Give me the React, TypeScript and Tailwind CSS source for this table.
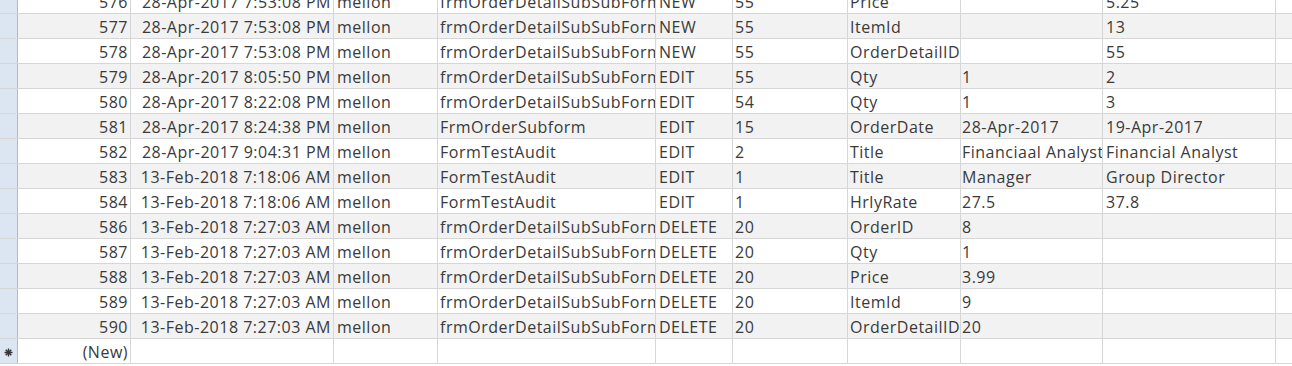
import React from "react";

type Row = {
  id: string;
  date: string;
  user: string;
  form: string;
  action: string;
  num: string;
  field: string;
  oldVal: string;
  newVal: string;
};

const rows: Row[] = [
  { id: "576", date: "28-Apr-2017 7:53:08 PM", user: "mellon", form: "frmOrderDetailSubSubForm", action: "NEW", num: "55", field: "Price", oldVal: "", newVal: "5.25" },
  { id: "577", date: "28-Apr-2017 7:53:08 PM", user: "mellon", form: "frmOrderDetailSubSubForm", action: "NEW", num: "55", field: "ItemId", oldVal: "", newVal: "13" },
  { id: "578", date: "28-Apr-2017 7:53:08 PM", user: "mellon", form: "frmOrderDetailSubSubForm", action: "NEW", num: "55", field: "OrderDetailID", oldVal: "", newVal: "55" },
  { id: "579", date: "28-Apr-2017 8:05:50 PM", user: "mellon", form: "frmOrderDetailSubSubForm", action: "EDIT", num: "55", field: "Qty", oldVal: "1", newVal: "2" },
  { id: "580", date: "28-Apr-2017 8:22:08 PM", user: "mellon", form: "frmOrderDetailSubSubForm", action: "EDIT", num: "54", field: "Qty", oldVal: "1", newVal: "3" },
  { id: "581", date: "28-Apr-2017 8:24:38 PM", user: "mellon", form: "FrmOrderSubform", action: "EDIT", num: "15", field: "OrderDate", oldVal: "28-Apr-2017", newVal: "19-Apr-2017" },
  { id: "582", date: "28-Apr-2017 9:04:31 PM", user: "mellon", form: "FormTestAudit", action: "EDIT", num: "2", field: "Title", oldVal: "Financiaal Analyst", newVal: "Financial Analyst" },
  { id: "583", date: "13-Feb-2018 7:18:06 AM", user: "mellon", form: "FormTestAudit", action: "EDIT", num: "1", field: "Title", oldVal: "Manager", newVal: "Group Director" },
  { id: "584", date: "13-Feb-2018 7:18:06 AM", user: "mellon", form: "FormTestAudit", action: "EDIT", num: "1", field: "HrlyRate", oldVal: "27.5", newVal: "37.8" },
  { id: "586", date: "13-Feb-2018 7:27:03 AM", user: "mellon", form: "frmOrderDetailSubSubForm", action: "DELETE", num: "20", field: "OrderID", oldVal: "8", newVal: "" },
  { id: "587", date: "13-Feb-2018 7:27:03 AM", user: "mellon", form: "frmOrderDetailSubSubForm", action: "DELETE", num: "20", field: "Qty", oldVal: "1", newVal: "" },
  { id: "588", date: "13-Feb-2018 7:27:03 AM", user: "mellon", form: "frmOrderDetailSubSubForm", action: "DELETE", num: "20", field: "Price", oldVal: "3.99", newVal: "" },
  { id: "589", date: "13-Feb-2018 7:27:03 AM", user: "mellon", form: "frmOrderDetailSubSubForm", action: "DELETE", num: "20", field: "ItemId", oldVal: "9", newVal: "" },
  { id: "590", date: "13-Feb-2018 7:27:03 AM", user: "mellon", form: "frmOrderDetailSubSubForm", action: "DELETE", num: "20", field: "OrderDetailID", oldVal: "20", newVal: "" },
];

const cell = "h-full shrink-0 border-r border-[#d6d6d6] overflow-hidden whitespace-nowrap flex items-center pt-[2px]";

const NewMark = () => (
  <svg width="9" height="9" viewBox="0 0 9 9" className="text-[#333]">
    <path d="M4.5 0.5v8M0.5 4.5h8M1.7 1.7l5.6 5.6M7.3 1.7l-5.6 5.6" stroke="currentColor" strokeWidth="1.4" />
  </svg>
);

const DataRow: React.FC<{ r: Row; gray: boolean }> = ({ r, gray }) => (
  <div className={`flex h-[25px] border-b border-[#d6d6d6] ${gray ? "bg-[#f2f2f2]" : "bg-white"}`}>
    <div className="h-full w-[18px] shrink-0 bg-[#dce6f2] border-r border-[#a8bcd6]" />
    <div className={`${cell} w-[113px] justify-end pr-[2px]`}>{r.id}</div>
    <div className={`${cell} w-[203px] justify-end pr-[2px]`}>{r.date}</div>
    <div className={`${cell} w-[104px] pl-[3px]`}>{r.user}</div>
    <div className={`${cell} w-[218px] pl-[2px]`}>{r.form}</div>
    <div className={`${cell} w-[77px] pl-[3px]`}>{r.action}</div>
    <div className={`${cell} w-[115px] pl-[2px]`}>{r.num}</div>
    <div className={`${cell} w-[113px] pl-[2px]`}>{r.field}</div>
    <div className={`${cell} w-[142px] pl-[1px]`}>{r.oldVal}</div>
    <div className={`${cell} w-[173px] pl-[3px]`}>{r.newVal}</div>
    <div className="h-full flex-1" />
  </div>
);

export default function App() {
  return (
    <div className="h-[366px] w-[1292px] overflow-hidden bg-white text-[16px] tracking-[0.5px] text-[#3a3a3a] font-['Open_Sans','Liberation_Sans',sans-serif]">
      <div className="-mt-[11px]">
        {rows.map((r, i) => (
          <DataRow key={r.id} r={r} gray={i % 2 === 1} />
        ))}
        <div className="flex h-[25px] border-b border-[#d6d6d6] bg-white">
          <div className="h-full w-[18px] shrink-0 bg-[#dce6f2] border-r border-[#a8bcd6] flex items-center justify-center pt-[2px]">
            <NewMark />
          </div>
          <div className={`${cell} w-[113px] justify-end pr-[2px]`}>(New)</div>
          <div className={`${cell} w-[203px]`} />
          <div className={`${cell} w-[104px]`} />
          <div className={`${cell} w-[218px]`} />
          <div className={`${cell} w-[77px]`} />
          <div className={`${cell} w-[115px]`} />
          <div className={`${cell} w-[113px]`} />
          <div className={`${cell} w-[142px]`} />
          <div className={`${cell} w-[173px]`} />
          <div className="h-full flex-1" />
        </div>
      </div>
    </div>
  );
}
